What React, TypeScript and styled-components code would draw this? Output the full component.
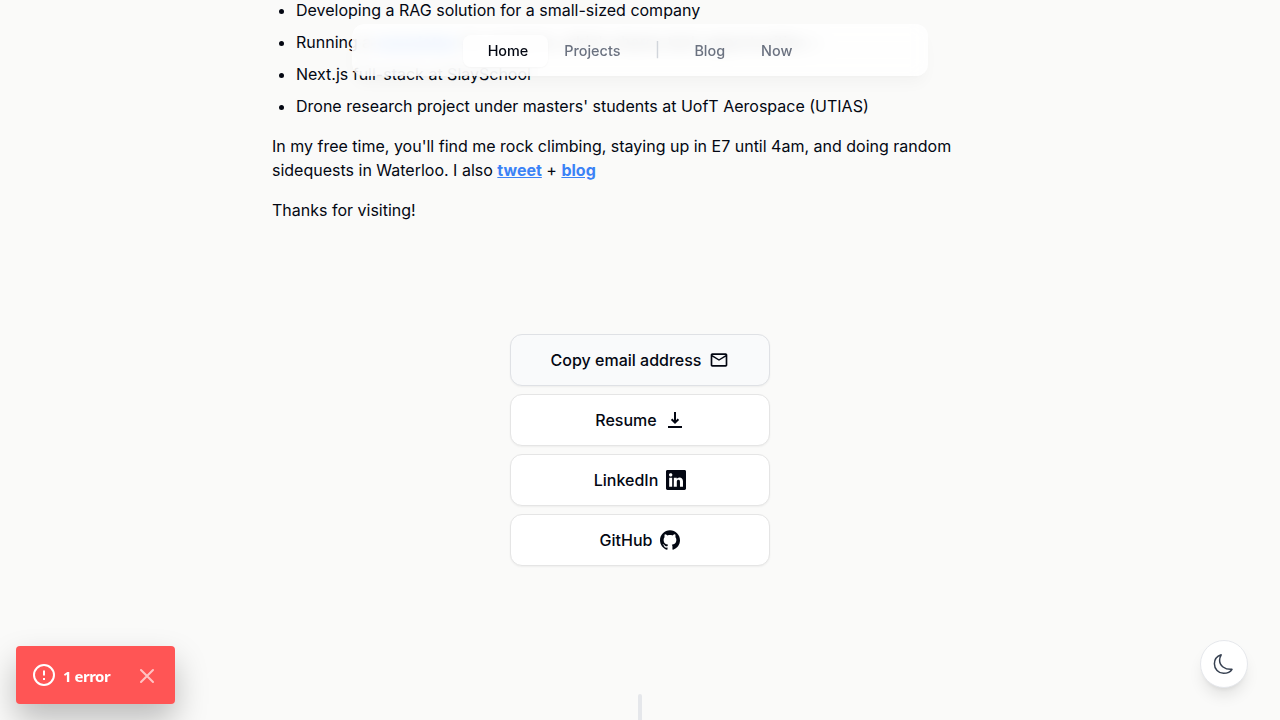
import React from "react";
import styled, { createGlobalStyle } from "styled-components";
import { MdOutlineEmail } from "react-icons/md";
import { SiGithub } from "react-icons/si";
import { BsLinkedin } from "react-icons/bs";

const Global = createGlobalStyle`
  *, *::before, *::after { box-sizing: border-box; }
  body {
    margin: 0;
    background: #fafaf9;
    color: #030712;
    font-family: Inter, sans-serif;
    font-size: 16px;
    line-height: 24px;
    overflow: hidden;
  }
`;

const Page = styled.main`
  height: 720px;
  overflow: hidden;
  display: flex;
  flex-direction: column;
  align-items: center;
`;

const Intro = styled.section`
  width: 736px;
  flex: none;
  margin-top: -2px;
`;

const List = styled.ul`
  margin: 0;
  padding-left: 24px;
  display: flex;
  flex-direction: column;
  gap: 8px;
`;

const Paragraph = styled.p`
  margin: 16px 0 0;
`;

const Link = styled.a`
  color: #3b82f6;
  font-weight: 700;
  text-decoration: underline;
`;

const Actions = styled.section`
  flex: none;
  width: 260px;
  margin: 112px 0 128px;
  display: flex;
  flex-direction: column;
  gap: 8px;
`;

const Action = styled.a<{ $tinted?: boolean }>`
  height: 52px;
  display: flex;
  align-items: center;
  justify-content: center;
  gap: 8px;
  border: 1px solid ${(p) => (p.$tinted ? "#dfe1e5" : "#e5e5e5")};
  border-radius: 12px;
  background: ${(p) => (p.$tinted ? "#f9fafb" : "#fff")};
  box-shadow: 0 1px 2px rgba(0, 0, 0, 0.05);
  font-weight: 500;
  svg { width: 20px; height: 20px; }
`;

const Divider = styled.div`
  flex: none;
  width: 4px;
  height: 64px;
  border-radius: 4px;
  background: #e5e7eb;
`;

const Nav = styled.nav`
  position: fixed;
  top: 24px;
  left: 352px;
  width: 576px;
  height: 52px;
  display: flex;
  align-items: center;
  justify-content: center;
  border-radius: 12px;
  background: rgba(255, 255, 255, 0.83);
  backdrop-filter: blur(8px);
  box-shadow: 0 10px 15px -3px rgba(0, 0, 0, 0.03), 0 4px 6px -4px rgba(0, 0, 0, 0.03);
  font-size: 14.4px;
  line-height: 20px;
  font-weight: 500;
`;

const NavItem = styled.a<{ $active?: boolean }>`
  position: relative;
  padding: 7px 18px 5px;
  color: ${(p) => (p.$active ? "#030712" : "#6b7280")};
`;

const Highlight = styled.span`
  position: absolute;
  z-index: -1;
  inset: 1px -2px -1px -7px;
  border-radius: 8px;
  background: rgba(255, 255, 255, 0.8);
  box-shadow: 0 1px 2px rgba(0, 0, 0, 0.03);
`;

const Separator = styled.span`
  width: 38px;
  text-align: center;
  color: #d1d5db;
`;

const Toast = styled.div`
  position: fixed;
  left: 16px;
  bottom: 16px;
  width: 159px;
  height: 58px;
  padding: 0 20px 0 16px;
  display: flex;
  align-items: center;
  border-radius: 4px;
  background: #ff5555;
  color: #fff;
  font-family: "Noto Sans", sans-serif;
  font-size: 15px;
  font-weight: 700;
  letter-spacing: -0.5px;
  box-shadow: 0 16px 32px rgba(0, 0, 0, 0.25);
`;

const ToastText = styled.span`
  margin-left: 7px;
  padding-top: 1px;
  flex: 1;
  white-space: nowrap;
`;

const CloseIcon = styled.svg`
  margin-top: 2px;
`;

const ThemeButton = styled.button`
  position: fixed;
  right: 32px;
  bottom: 32px;
  width: 48px;
  height: 48px;
  padding: 0;
  display: flex;
  align-items: center;
  justify-content: center;
  border: 1px solid #e5e7eb;
  border-radius: 50%;
  background: #fff;
  color: #374151;
  box-shadow: 0 10px 15px -3px rgba(0, 0, 0, 0.1), 0 4px 6px -4px rgba(0, 0, 0, 0.1);
`;

const DownloadIcon = () => (
  <svg viewBox="0 0 20 20" fill="none" stroke="currentColor" strokeWidth="2">
    <path d="M10 2v10.5M6.6 9.2l3.4 3.4 3.4-3.4" />
    <path d="M3 17h14" />
  </svg>
);

const MoonIcon = () => (
  <svg width="24" height="24" viewBox="0 0 24 24" fill="none" stroke="currentColor" strokeWidth="1.5" strokeLinejoin="round">
    <path d="M9.2 2.8C5 4.2 2.4 7.7 2.4 11.8c0 5.3 4 9.5 9.1 9.5 3.6 0 6.9-1.3 8.5-4C12.8 17.8 7.4 13.7 7.6 8c.1-2 .7-3.7 1.6-5.2z" />
  </svg>
);

export default function App() {
  return (
    <>
      <Global />
      <Page>
        <Intro>
          <List>
            <li>Developing a RAG solution for a small-sized company</li>
            <li>
              Running a <Link>newsletter</Link> for students, which shares tech opportunities +
            </li>
            <li>Next.js full-stack at SlaySchool</li>
            <li>Drone research project under masters' students at UofT Aerospace (UTIAS)</li>
          </List>
          <Paragraph>
            In my free time, you'll find me rock climbing, staying up in E7 until 4am, and doing
            random sidequests in Waterloo. I also <Link>tweet</Link> + <Link>blog</Link>
          </Paragraph>
          <Paragraph>Thanks for visiting!</Paragraph>
        </Intro>
        <Actions>
          <Action $tinted>Copy email address <MdOutlineEmail /></Action>
          <Action>Resume <DownloadIcon /></Action>
          <Action>LinkedIn <BsLinkedin /></Action>
          <Action>GitHub <SiGithub /></Action>
        </Actions>
        <Divider />
      </Page>
      <Nav>
        <NavItem $active><Highlight />Home</NavItem>
        <NavItem>Projects</NavItem>
        <Separator>|</Separator>
        <NavItem>Blog</NavItem>
        <NavItem>Now</NavItem>
      </Nav>
      <Toast>
        <svg width="24" height="24" viewBox="0 0 24 24" fill="none" stroke="currentColor" strokeWidth="2">
          <circle cx="12" cy="12" r="10" />
          <path d="M12 7.5v5M12 15v2" />
        </svg>
        <ToastText>1 error</ToastText>
        <CloseIcon width="16" height="16" viewBox="0 0 16 16" fill="none" stroke="currentColor" strokeWidth="2" strokeLinecap="round" opacity="0.65">
          <path d="M2 2l12 12M14 2L2 14" />
        </CloseIcon>
      </Toast>
      <ThemeButton aria-label="Toggle theme">
        <MoonIcon />
      </ThemeButton>
    </>
  );
}
